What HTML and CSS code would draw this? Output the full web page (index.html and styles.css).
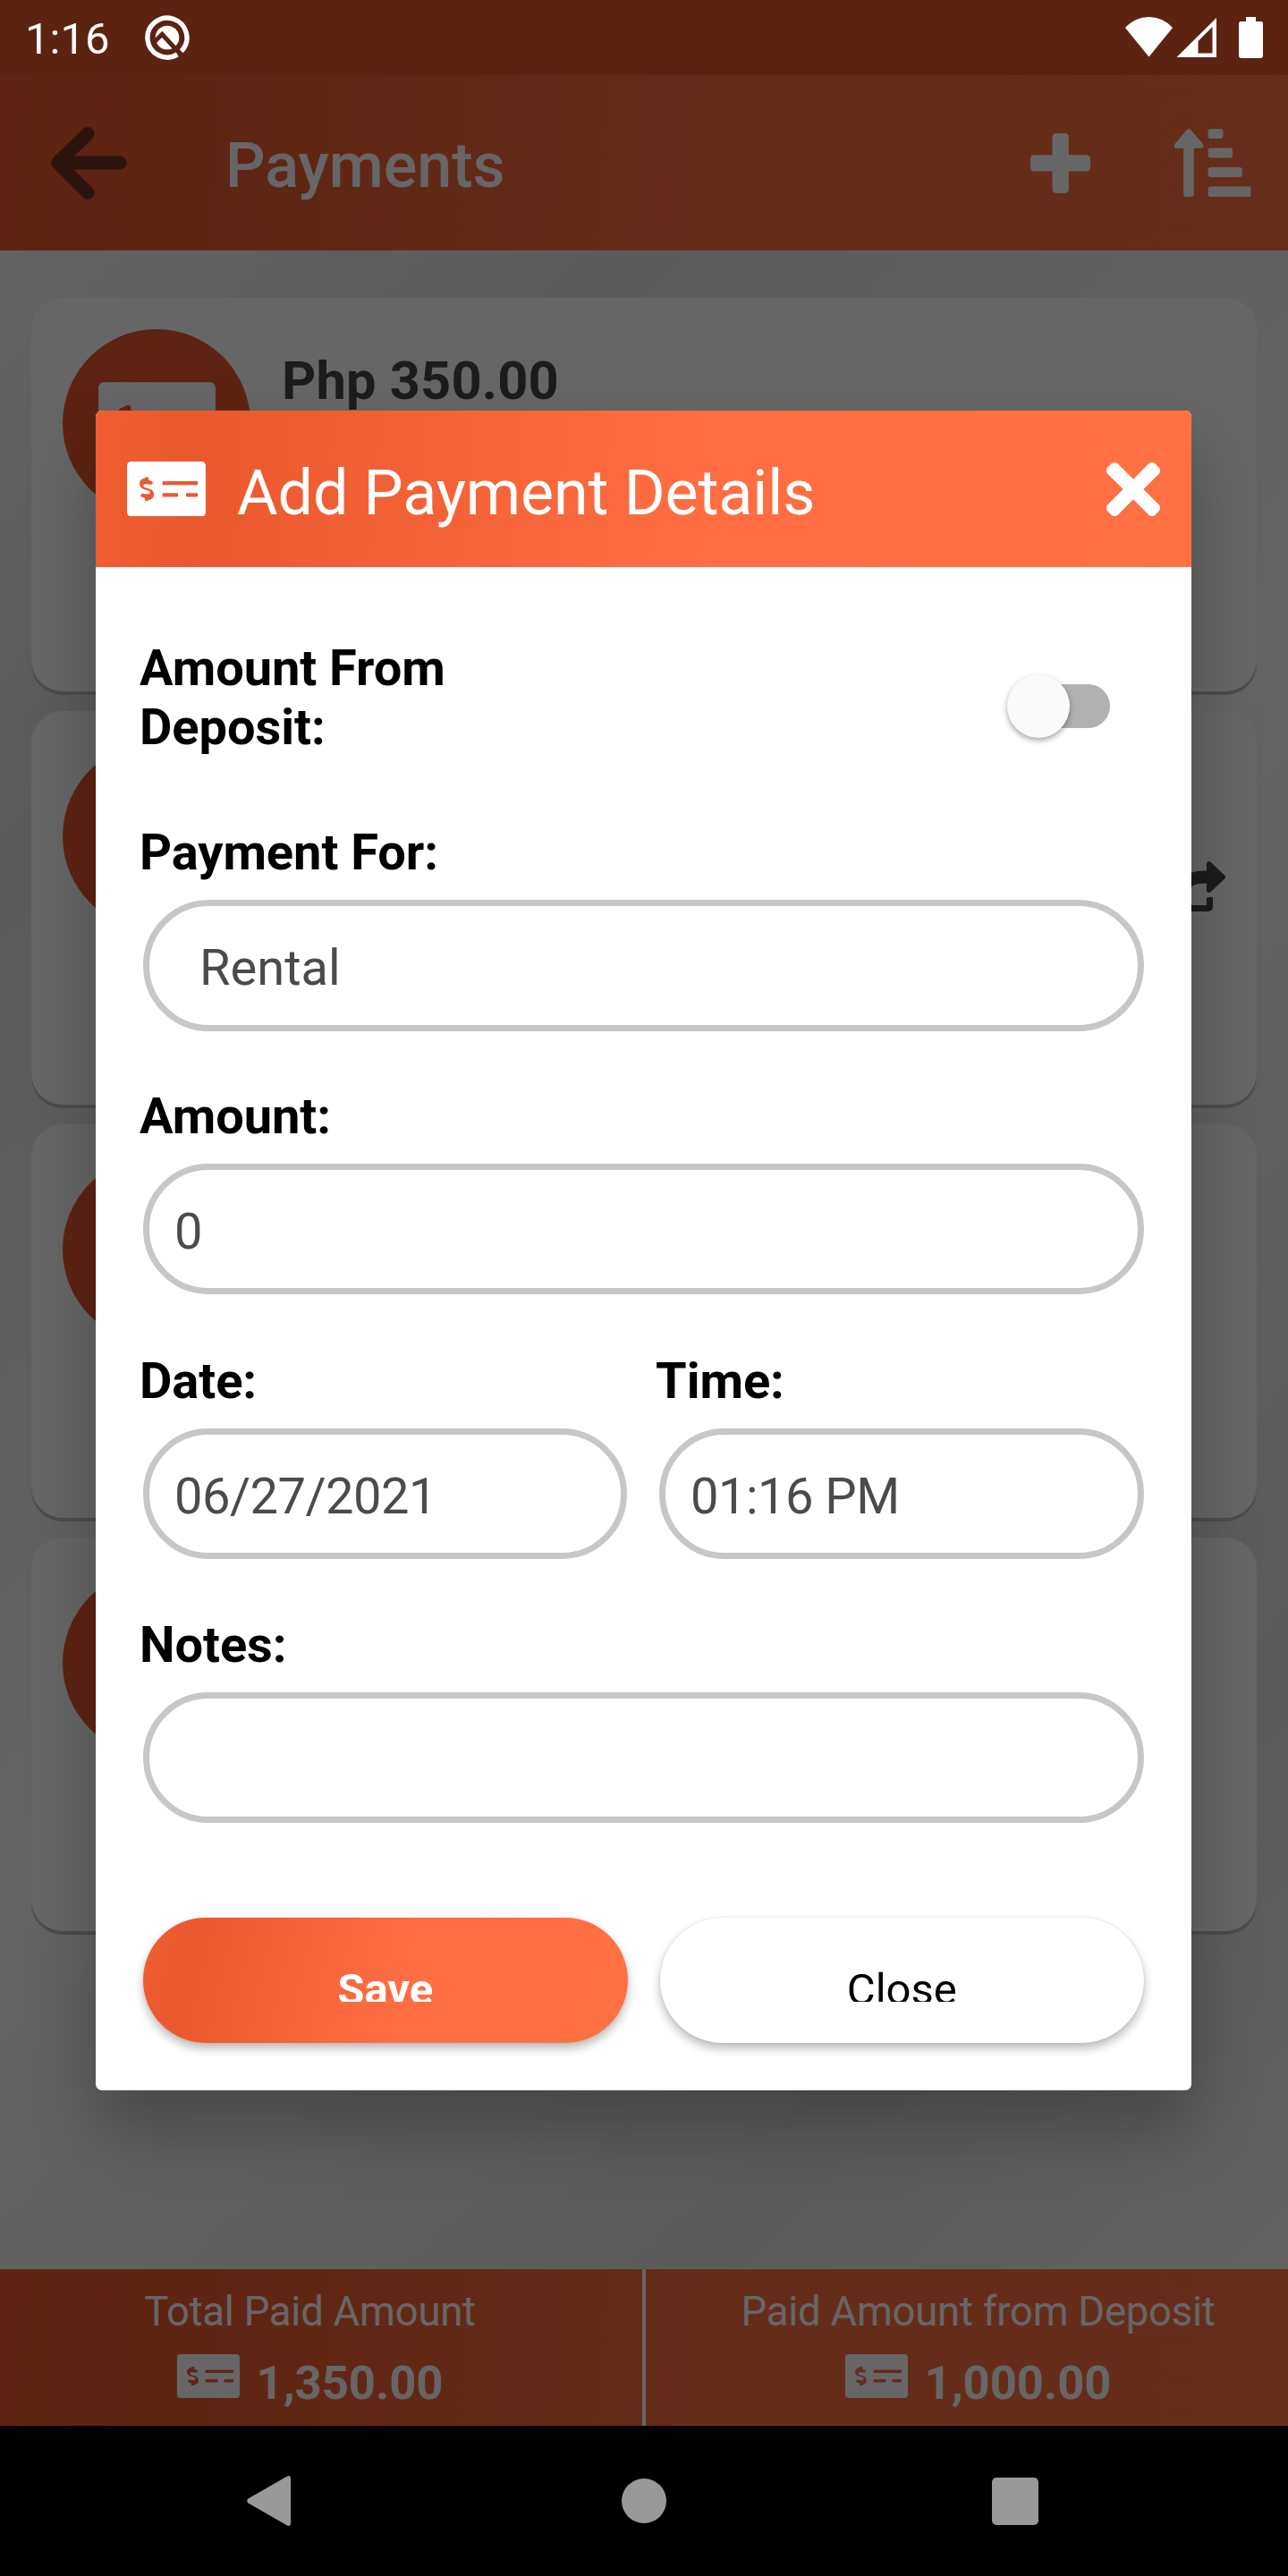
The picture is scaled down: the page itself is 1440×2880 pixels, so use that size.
FILE: index.html
```html
<!DOCTYPE html>
<html lang="en">
<head>
<meta charset="utf-8">
<title>Payments</title>
<link rel="stylesheet" href="styles.css">
</head>
<body>
<svg width="0" height="0" class="defs" aria-hidden="true">
  <symbol id="money" viewBox="0 32 640 448"><path d="M608 32H32C14.33 32 0 46.33 0 64v384c0 17.67 14.33 32 32 32h576c17.67 0 32-14.33 32-32V64c0-17.67-14.33-32-32-32zM176 327.88V344c0 4.42-3.58 8-8 8h-16c-4.42 0-8-3.58-8-8v-16.29c-11.29-.58-22.27-4.52-31.37-11.35-3.9-2.93-4.1-8.77-.57-12.14l11.75-11.21c2.77-2.64 6.89-2.76 10.13-.73 3.87 2.42 8.26 3.72 12.82 3.72h28.11c6.5 0 11.8-5.92 11.8-13.19 0-5.95-3.61-11.19-8.77-12.73l-45-13.5c-18.59-5.58-31.58-23.42-31.58-43.39 0-24.52 19.05-44.44 42.67-45.07V168c0-4.42 3.58-8 8-8h16c4.42 0 8 3.58 8 8v16.29c11.29.58 22.27 4.51 31.37 11.35 3.9 2.93 4.1 8.77.57 12.14l-11.75 11.21c-2.77 2.64-6.89 2.76-10.13.73-3.87-2.43-8.26-3.72-12.82-3.72h-28.11c-6.5 0-11.8 5.92-11.8 13.19 0 5.95 3.61 11.19 8.77 12.73l45 13.5c18.59 5.58 31.58 23.42 31.58 43.39 0 24.53-19.05 44.44-42.67 45.07zM416 312c0 4.42-3.58 8-8 8H296c-4.42 0-8-3.58-8-8v-16c0-4.42 3.58-8 8-8h112c4.42 0 8 3.58 8 8v16zm160 0c0 4.42-3.58 8-8 8h-80c-4.42 0-8-3.58-8-8v-16c0-4.42 3.58-8 8-8h80c4.42 0 8 3.58 8 8v16zm0-96c0 4.42-3.58 8-8 8H296c-4.42 0-8-3.58-8-8v-16c0-4.42 3.58-8 8-8h272c4.42 0 8 3.58 8 8v16z"/></symbol>
</svg>
<div class="phone">
  <div class="status">
    <span class="clock">1:16</span>
    <svg class="q-icon" width="50" height="50" viewBox="0 0 50 50">
      <path d="M40.800 40.300A22 22 0 1 0 36.300 43.900" fill="none" stroke="#fff" stroke-width="5.400"/>
      <circle cx="25" cy="25" r="13.300" fill="#fff"/>
      <path d="M9.500 31L19.200 21.300L36 39.500" fill="none" stroke="#5c2311" stroke-width="5"/>
    </svg>
    <svg class="status-icons" width="156" height="48" viewBox="1257 18 156 48" fill="#fff">
      <path d="M1258 31Q1269 19 1284.500 19T1311 31L1284.500 63.500z"/>
      <path fill-rule="evenodd" d="M1315.500 64L1360 20V64zM1339.500 46V59.500H1355.500V30z"/>
      <path d="M1387 24H1393V19H1404V24H1410Q1412 24 1412 27V62Q1412 65 1409 65H1388Q1385 65 1385 62V27Q1385 24 1387 24z"/>
    </svg>
  </div>

  <div class="app">
    <header class="appbar">
      <svg width="88" height="84" viewBox="54 140 88 84"><path d="M98 149.500L64.500 182L98 215.500M66 182H134" fill="none" stroke="#6e3423" stroke-width="15" stroke-linecap="round" stroke-linejoin="round"/></svg>
      <h1>Payments</h1>
      <svg class="add" width="67" height="67" viewBox="0 0 67 67" fill="#fff"><rect x="24.500" width="18.400" height="67" rx="4.500"/><rect y="24.200" width="67" height="18.400" rx="4.500"/></svg>
      <svg width="86" height="77" viewBox="0 0 86 77" fill="#fff">
        <path d="M13.500 1.500Q16 -1.500 18.500 1.500L32 17Q34 21.700 30 21.700H21.700V73Q21.700 76 18.700 76H13Q10.200 76 10.200 73V21.700H2Q-1.500 21.700 0.500 17z"/>
        <rect x="37.600" width="16.800" height="11" rx="3"/><rect x="37.600" y="21.500" width="27.500" height="11" rx="3"/><rect x="37.600" y="43" width="38.200" height="11" rx="3"/>
        <path d="M40.600 64.500H85.300V76H40.600Q37.600 76 37.600 73V67.500Q37.600 64.500 40.600 64.500z"/>
      </svg>
    </header>

    <main class="list">
      <article class="card"><span class="avatar"><svg width="131" height="92"><use href="#money"/></svg></span><strong>Php 350.00</strong></article>
      <article class="card"><span class="avatar"></span>
        <svg class="share" width="63" height="56" viewBox="0 0 576 512"><path d="M568.482 177.448L424.479 313.433C409.300 327.768 384 317.140 384 295.985v-71.963c-144.575.97-205.566 35.113-164.775 171.353 4.483 14.973-12.846 26.567-25.006 17.330C155.252 383.105 120 326.488 120 269.339c0-143.937 117.599-172.500 264-173.312V24.012c0-21.174 25.317-31.768 40.479-17.448l144.003 135.988c10.020 9.463 10.028 25.425 0 34.896zM384 379.128V448H64V128h50.916a11.990 11.990 0 0 0 8.648-3.693c14.953-15.568 32.237-27.890 51.014-37.676C185.708 80.830 181.584 64 169.033 64H48C21.490 64 0 85.490 0 112v352c0 26.510 21.490 48 48 48h352c26.510 0 48-21.490 48-48v-88.806c0-8.288-8.197-14.066-16.011-11.302a71.830 71.830 0 0 1-34.189 3.377c-7.270-1.046-13.800 4.514-13.800 11.859z"/></svg>
      </article>
      <article class="card"><span class="avatar"></span></article>
      <article class="card"><span class="avatar"></span></article>
    </main>

    <footer class="totals">
      <div class="total"><span>Total Paid Amount</span><b><svg width="70" height="49"><use href="#money"/></svg><em>1,350.00</em></b></div>
      <div class="total right"><span>Paid Amount from Deposit</span><b><svg width="70" height="49"><use href="#money"/></svg><em>1,000.00</em></b></div>
    </footer>

    <div class="scrim">
      <section class="modal">
        <div class="modal-head">
          <svg width="88" height="61.500"><use href="#money"/></svg>
          <h2>Add Payment Details</h2>
          <svg class="close" width="60" height="60" viewBox="0 80 352 352"><path d="M242.720 256l100.070-100.070c12.280-12.280 12.280-32.190 0-44.480l-22.240-22.240c-12.280-12.280-32.190-12.280-44.480 0L176 189.280 75.930 89.210c-12.280-12.280-32.190-12.280-44.480 0L9.210 111.450c-12.280 12.280-12.280 32.190 0 44.480L109.280 256 9.210 356.070c-12.280 12.280-12.280 32.190 0 44.480l22.240 22.240c12.280 12.280 32.200 12.280 44.480 0L176 322.720l100.070 100.070c12.280 12.280 32.200 12.280 44.480 0l22.240-22.240c12.280-12.280 12.280-32.190 0-44.480L242.720 256z"/></svg>
        </div>
        <form class="form">
          <div class="toggle-row">
            <label>Amount From<br>Deposit:</label>
            <span class="switch"><i></i></span>
          </div>
          <div class="field"><label>Payment For:</label><div class="input select">Rental</div></div>
          <div class="field"><label>Amount:</label><div class="input">0</div></div>
          <div class="pair">
            <div class="field"><label>Date:</label><div class="input">06/27/2021</div></div>
            <div class="field"><label>Time:</label><div class="input">01:16 PM</div></div>
          </div>
          <div class="field"><label>Notes:</label><div class="input"></div></div>
          <div class="actions">
            <div class="btn save"><span>Save</span></div>
            <div class="btn"><span>Close</span></div>
          </div>
        </form>
      </section>
    </div>
  </div>

  <nav class="navbar">
    <svg width="50" height="58" viewBox="0 0 50 58"><path d="M1.500 26.500L45 1.500Q49 0 49 4V54Q49 58 45 56.500L1.500 31.500Q-1 29 1.500 26.500z" fill="#999"/></svg>
    <svg class="home" width="50" height="50"><circle cx="25" cy="25" r="25" fill="#999"/></svg>
    <svg width="52" height="53"><rect width="52" height="53" rx="5" fill="#999"/></svg>
  </nav>
</div>
</body>
</html>
```
FILE: styles.css
```css
* { box-sizing: border-box; }
body { margin: 0; font-family: Roboto, "Liberation Sans", sans-serif; }
svg { display: block; flex: none; }
.defs { position: absolute; }
h1, h2 { margin: 0; }

.phone { width: 1440px; height: 2880px; display: flex; flex-direction: column; overflow: hidden; background: #000; }

.status { height: 84px; flex: none; display: flex; align-items: flex-start; background: #5c2311; color: #fff; padding: 0 27px 0 28px; }
.clock { width: 134px; font-size: 49px; line-height: 58px; padding-top: 15px; }
.q-icon { margin-top: 17px; }
.status-icons { margin: 18px 0 0 auto; }

.app { position: relative; height: 2628px; flex: none; display: flex; flex-direction: column; }
.appbar, .totals { background: linear-gradient(94deg, #ee5b30 0%, #ea592d 8%, #ff6e42 54%, #ff7043 100%); }
.appbar { height: 196px; flex: none; display: flex; align-items: center; padding: 0 41px 0 54px; color: #fff; }
.appbar h1 { margin-left: 110px; font-size: 70px; line-height: 82px; font-weight: 500; padding-top: 5px; }
.appbar .add { margin: 0 94px 0 auto; }

.list { flex: 1; padding: 53px 35px 0; display: flex; flex-direction: column; gap: 22px;
  background: linear-gradient(135deg, #f7f7f7 0%, #e3e3e3 19%, #fafafa 50%, #e3e3e3 82%, #f5f5f5 100%); }
.card { height: 440px; flex: none; display: flex; align-items: flex-start; background: #fff; border-radius: 35px; box-shadow: 0 4px 0 #c0c0c0; padding: 35px; }
.card strong { margin: 23px 0 0 35px; font-size: 59.5px; line-height: 70px; color: #484848; letter-spacing: 0.2px; }
.avatar { width: 210px; height: 210px; border-radius: 50%; background: #ea592d; display: flex; align-items: center; justify-content: center; flex: none; }
.avatar svg, .totals svg, .modal-head svg { fill: #fff; }
.share { margin: 133px 0 0 auto; fill: #464646; }

.totals { height: 175px; flex: none; display: flex; color: #fff; }
.total { width: 718px; display: flex; flex-direction: column; align-items: center; padding: 21px 25px 0 0; }
.total.right { width: 722px; border-left: 4px solid #fff; padding: 21px 0 0 25px; }
.total.right span { margin-left: 0; }
.total.right b { margin-left: 0; }
.total span { font-size: 45.5px; line-height: 54px; letter-spacing: -0.25px; }
.total b { display: flex; align-items: flex-start; gap: 19px; font-size: 52.5px; line-height: 62px; margin-top: 15px; }
.total em { font-style: normal; padding-top: 6px; }
.total b svg { margin-top: 5px; }

.scrim { position: absolute; inset: 0; padding: 375px 108px 0 107px; background: rgba(0, 0, 0, 0.6); }
.modal { width: 1225px; height: 1878px; border-radius: 7px; overflow: hidden; background: #fff; box-shadow: 0 42px 76px rgba(0, 0, 0, 0.25); }
.modal-head { height: 175px; display: flex; align-items: center; padding: 0 35px; color: #fff;
  background: linear-gradient(93.500deg, #f05d32 0%, #ea592d 9%, #ff6e42 56%, #ff7043 100%); }
.modal-head h2 { margin-left: 35px; font-size: 70px; line-height: 82px; font-weight: 400; padding-top: 8px; letter-spacing: -0.1px; }
.modal-head .close { margin-left: auto; }

.form { padding: 80px 49px 0; }
label { display: block; font-size: 56px; line-height: 66px; font-weight: 700; color: #000; letter-spacing: -0.05px; }
.toggle-row { display: flex; height: 132px; align-items: flex-start; margin-bottom: 74px; }
.switch { position: relative; width: 104px; height: 49px; border-radius: 25px; background: #b1b1b1; margin: 51px 42px 0 auto; }
.switch i { position: absolute; left: -11px; top: -11px; width: 70px; height: 71px; border-radius: 50%; background: #fafafa; box-shadow: 0 3px 6px rgba(0, 0, 0, 0.35); }

.field { height: 295.3px; }
.pair { display: grid; grid-template-columns: 549px 549px; gap: 29px; }
.pair .field + .field label { margin-left: -1px; }
.pair .input { margin: 20px 4px 0 4px; }
.pair .field + .field .input { margin-left: 3px; }
.input { height: 146px; margin: 20px 4px 0 4px; border: 7px solid #c7c7c7; border-radius: 74px; padding: 36px 28px 0; font-size: 56px; line-height: 66px; color: #4b4b4b; }
.input.select { height: 147px; padding-left: 56px; }
.pair .input { letter-spacing: -0.5px; }

.actions { display: flex; gap: 36px; padding: 0 4px; margin-top: 43px; }
.btn { flex: 1; height: 140px; border-radius: 70px; background: #fff; color: #000; display: flex; justify-content: center; align-items: flex-start; font-size: 49px; line-height: 58px; box-shadow: 0 6px 11px rgba(0, 0, 0, 0.27), 0 0 3px rgba(0, 0, 0, 0.1); }
.btn span { height: 42px; margin-top: 52px; overflow: hidden; }
.btn.save { color: #fff; font-weight: 700; background: linear-gradient(103deg, #f05d32 0%, #ea592d 10%, #ff6e42 54%, #ff7043 100%); }

.navbar { flex: 1; display: flex; align-items: center; justify-content: space-between; padding: 0 279px 0 276px; background: #000; }
.home { margin-left: 4px; }
```
